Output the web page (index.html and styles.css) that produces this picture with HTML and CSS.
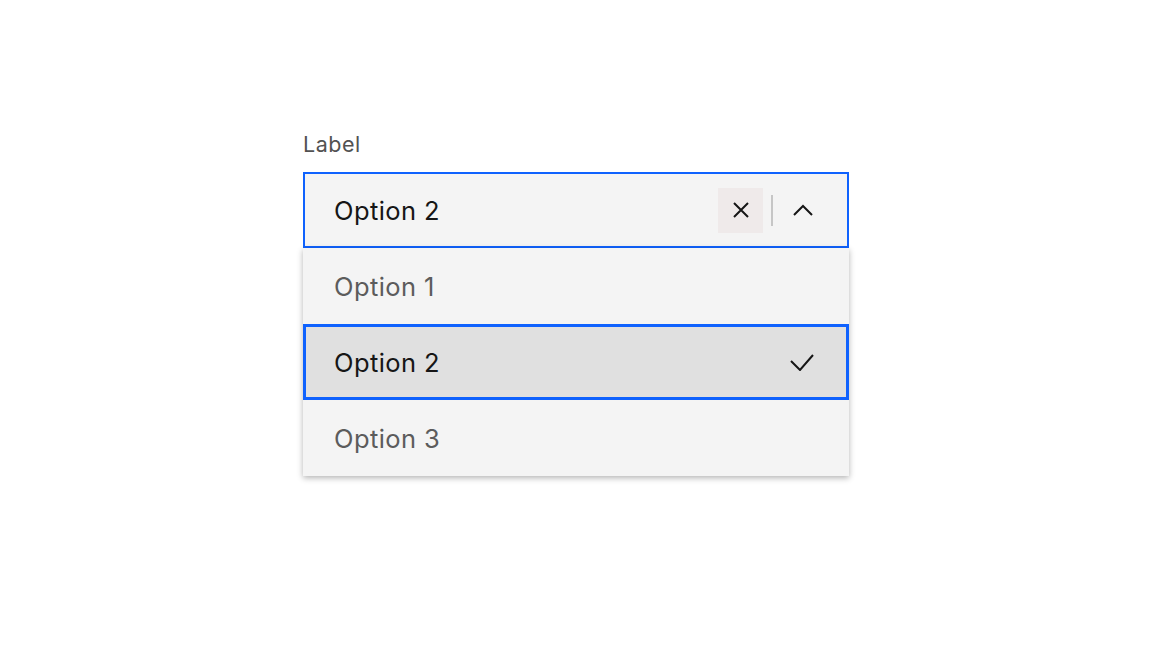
FILE: index.html
```html
<!DOCTYPE html>
<html lang="en">
<head>
<meta charset="utf-8">
<title>Combo box</title>
<link rel="stylesheet" href="styles.css">
</head>
<body>
<div class="page">
  <div class="combo">
    <label class="label">Label</label>
    <div class="field">
      <span class="value">Option 2</span>
      <button class="clear" aria-label="Clear">
        <svg width="16" height="16" viewBox="0 0 16 16"><path d="M1 1L15 15M15 1L1 15" stroke="#161616" stroke-width="2" fill="none"/></svg>
      </button>
      <span class="divider"></span>
      <span class="chevron">
        <svg width="20" height="12" viewBox="0 0 20 12"><path d="M1 11L10 2L19 11" stroke="#161616" stroke-width="2" fill="none"/></svg>
      </span>
    </div>
    <ul class="menu">
      <li class="item">Option 1</li>
      <li class="item selected">
        <span>Option 2</span>
        <svg width="24" height="18" viewBox="0 0 24 18"><path d="M1 8L10 17L23 2" stroke="#161616" stroke-width="2" fill="none"/></svg>
      </li>
      <li class="item">Option 3</li>
    </ul>
  </div>
</div>
</body>
</html>
```
FILE: styles.css
```css
* { box-sizing: border-box; }
html, body { margin: 0; padding: 0; background: #ffffff; }
body { font-family: Inter, "Noto Sans", "Liberation Sans", sans-serif; color: #161616; }
.page { width: 1152px; height: 648px; padding: 128px 0 0 303px; }
.combo { width: 546px; display: flex; flex-direction: column; }
.label { font-size: 21.5px; line-height: 32px; color: #525252; letter-spacing: 0.5px; margin-bottom: 12px; }
.field {
  height: 76px; border: 2px solid #0f62fe; background: #f4f4f4;
  display: flex; align-items: center; padding: 1px 29px 0 29px;
}
.value { flex: 1; font-size: 25.5px; letter-spacing: 0.4px; color: #161616; }
.clear {
  width: 45px; height: 45px; background: #efeaea; border: 0; padding: 0;
  display: flex; align-items: center; justify-content: center; margin-top: -1px;
}
.divider { width: 2px; height: 31px; background: #c6c6c6; margin-left: 8px; margin-top: -1px; }
.chevron { width: 30px; height: 30px; margin-left: 15px; margin-top: -1px; display: flex; align-items: center; justify-content: center; }
.menu {
  list-style: none; margin: 0; padding: 0; background: #f4f4f4;
  box-shadow: 0 2px 6px rgba(0,0,0,0.3);
}
.item {
  height: 76px; display: flex; align-items: center; justify-content: space-between;
  padding: 1px 31px 0; font-size: 25.5px; letter-spacing: 0.4px; color: #5c5c5c;
}
.item.selected {
  background: #e0e0e0; color: #161616; border: 3px solid #0f62fe;
  padding: 0 32px 0 28px;
}
```
